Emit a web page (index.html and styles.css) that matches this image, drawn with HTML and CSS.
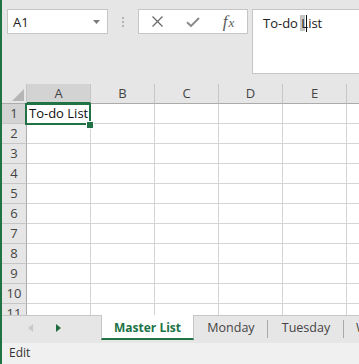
FILE: index.html
```html
<!DOCTYPE html>
<html>
<head>
<meta charset="utf-8">
<link rel="stylesheet" href="styles.css">
</head>
<body>
<div class="app">
  <div class="topbar">
    <div class="namebox">
      <span class="nb-text">A1</span>
      <svg class="nb-drop" width="7" height="4" viewBox="0 0 7 4"><path d="M0 0h7L3.5 4z" fill="#7a7a7a"/></svg>
    </div>
    <div class="grip"><i></i><i></i><i></i></div>
    <div class="fxbtns">
      <div class="slot s1"><svg width="11" height="11" viewBox="0 0 11 11"><path d="M0.5 0.5L10.5 10.5M10.5 0.5L0.5 10.5" stroke="#6a6a6a" stroke-width="1.3" fill="none"/></svg></div>
      <div class="slot s2"><svg width="14" height="10" viewBox="0 0 14 10"><path d="M1 5.2L5 9L13 1" stroke="#8c8c8c" stroke-width="2" fill="none"/></svg></div>
      <div class="slot s3"><span class="fx"><span class="fx-f">f</span><span class="fx-x">x</span></span></div>
    </div>
    <div class="formula">To-do <span class="caret">L</span>ist</div>
  </div>

  <div class="sheet">
    <div class="grid">
      <div class="corner"><svg width="12" height="12" viewBox="0 0 12 12"><path d="M12 0V12H0z" fill="#b5b5b5"/></svg></div>
      <div class="ch sel">A</div>
      <div class="ch">B</div>
      <div class="ch">C</div>
      <div class="ch">D</div>
      <div class="ch">E</div>
      <div class="ch"></div>

      <div class="rh sel">1</div><div class="c text">To-do List</div><div class="c"></div><div class="c"></div><div class="c"></div><div class="c"></div><div class="c"></div>
      <div class="rh">2</div><div class="c"></div><div class="c"></div><div class="c"></div><div class="c"></div><div class="c"></div><div class="c"></div>
      <div class="rh">3</div><div class="c"></div><div class="c"></div><div class="c"></div><div class="c"></div><div class="c"></div><div class="c"></div>
      <div class="rh">4</div><div class="c"></div><div class="c"></div><div class="c"></div><div class="c"></div><div class="c"></div><div class="c"></div>
      <div class="rh">5</div><div class="c"></div><div class="c"></div><div class="c"></div><div class="c"></div><div class="c"></div><div class="c"></div>
      <div class="rh">6</div><div class="c"></div><div class="c"></div><div class="c"></div><div class="c"></div><div class="c"></div><div class="c"></div>
      <div class="rh">7</div><div class="c"></div><div class="c"></div><div class="c"></div><div class="c"></div><div class="c"></div><div class="c"></div>
      <div class="rh">8</div><div class="c"></div><div class="c"></div><div class="c"></div><div class="c"></div><div class="c"></div><div class="c"></div>
      <div class="rh">9</div><div class="c"></div><div class="c"></div><div class="c"></div><div class="c"></div><div class="c"></div><div class="c"></div>
      <div class="rh">10</div><div class="c"></div><div class="c"></div><div class="c"></div><div class="c"></div><div class="c"></div><div class="c"></div>
      <div class="rh">11</div><div class="c"></div><div class="c"></div><div class="c"></div><div class="c"></div><div class="c"></div><div class="c"></div>
    </div>
    <div class="selection"><span class="handle"></span></div>
  </div>

  <div class="tabbar">
    <div class="nav">
      <svg class="arr" width="5" height="8" viewBox="0 0 5 8"><path d="M5 0V8L0 4z" fill="#c9c9c9"/></svg>
      <svg class="arr" width="5" height="8" viewBox="0 0 5 8"><path d="M0 0V8L5 4z" fill="#1f6b40"/></svg>
    </div>
    <div class="tab active">Master List</div>
    <div class="tab">Monday</div>
    <div class="tab">Tuesday</div>
    <div class="tab">Wednesday</div>
  </div>

  <div class="status">Edit</div>
</div>
</body>
</html>
```

FILE: styles.css
```css
html, body {
  margin: 0;
  padding: 0;
}
body {
  background: #e6e6e6;
  font-family: "Open Sans", "Noto Sans", sans-serif;
  overflow: hidden;
}
.app {
  width: 357px;
  height: 364px;
  border-left: 2px solid #217346;
  display: flex;
  flex-direction: column;
  overflow: hidden;
}

/* formula bar area */
.topbar {
  height: 84px;
  flex: none;
  display: flex;
  align-items: flex-start;
  padding: 9px 0 0 5px;
  box-sizing: border-box;
}
.namebox {
  width: 101px;
  height: 25px;
  box-sizing: border-box;
  background: #fff;
  border: 1px solid #c6c6c6;
  display: flex;
  align-items: center;
  justify-content: space-between;
  padding: 0 7px 0 5px;
  font-size: 13px;
  color: #222;
}
.nb-drop { margin-top: 1px; }
.grip {
  width: 30px;
  height: 25px;
  display: flex;
  flex-direction: column;
  align-items: center;
  justify-content: center;
  gap: 2px;
}
.grip i {
  display: block;
  width: 2px;
  height: 2px;
  background: #b4b4b4;
}
.fxbtns {
  width: 110px;
  height: 25px;
  box-sizing: border-box;
  background: #fff;
  border: 1px solid #c6c6c6;
  display: flex;
}
.slot {
  display: flex;
  align-items: center;
  justify-content: center;
  height: 100%;
}
.s1 { width: 36px; }
.s2 { width: 35px; }
.s3 { width: 37px; }
.fx {
  font-family: "Liberation Serif", "DejaVu Serif", serif;
  font-style: italic;
  color: #5a5a5a;
  line-height: 1;
  margin-top: -1px;
}
.fx-f { font-size: 17px; }
.fx-x { font-size: 13px; margin-left: 1px; }
.formula {
  flex: 1;
  height: 65px;
  margin-left: 4px;
  margin-right: -2px;
  box-sizing: border-box;
  background: #fff;
  border: 1px solid #c6c6c6;
  padding: 3px 10px;
  font-size: 13px;
  line-height: 20px;
  color: #222;
  position: relative;
  z-index: 0;
}
.caret {
  position: relative;
}
.caret::before {
  content: "";
  position: absolute;
  left: -1px;
  top: 1px;
  bottom: 1px;
  width: 5px;
  background: #c4c4c4;
  z-index: -1;
}
.caret::after {
  content: "";
  position: absolute;
  left: 5px;
  top: 1px;
  bottom: 0;
  width: 1px;
  background: #111;
}

/* sheet */
.sheet {
  height: 231px;
  flex: none;
  position: relative;
  overflow: hidden;
  background: #fff;
}
.grid {
  display: grid;
  grid-template-columns: 25px repeat(6, 64px);
  grid-auto-rows: 20px;
  font-size: 13px;
  color: #222;
}
.grid > div {
  box-sizing: border-box;
}
.corner {
  background: #e6e6e6;
  border-right: 1px solid #c6c6c6;
  border-bottom: 1px solid #ababab;
  display: flex;
  align-items: flex-end;
  justify-content: flex-end;
  padding: 0 2px 2px 0;
}
.ch {
  background: #e6e6e6;
  border-right: 1px solid #c6c6c6;
  border-bottom: 1px solid #ababab;
  text-align: center;
  line-height: 19px;
  color: #444;
}
.ch.sel {
  background: #d3d3d3;
  border-bottom: 2px solid #217346;
}
.rh {
  background: #e6e6e6;
  border-right: 1px solid #ababab;
  border-bottom: 1px solid #c6c6c6;
  text-align: center;
  line-height: 19px;
  color: #444;
}
.rh.sel {
  background: #d3d3d3;
}
.c {
  border-right: 1px solid #d4d4d4;
  border-bottom: 1px solid #d4d4d4;
  line-height: 19px;
  white-space: nowrap;
}
.c.text {
  padding-left: 2px;
  overflow: visible;
  color: #111;
}
.selection {
  position: absolute;
  left: 23px;
  top: 19px;
  width: 66px;
  height: 22px;
  box-sizing: border-box;
  border: 2px solid #217346;
}
.handle {
  position: absolute;
  right: -4px;
  bottom: -5px;
  width: 6px;
  height: 6px;
  box-sizing: border-box;
  background: #217346;
  outline: 1px solid #fff;
}

/* sheet tabs */
.tabbar {
  height: 28px;
  flex: none;
  box-sizing: border-box;
  border-top: 1px solid #c6c6c6;
  background: #e6e6e6;
  display: flex;
  align-items: flex-start;
  white-space: nowrap;
  font-size: 12.5px;
}
.nav {
  width: 99px;
  height: 24px;
  flex: none;
  display: flex;
  align-items: center;
  padding-left: 26px;
  box-sizing: border-box;
  gap: 23px;
}
.tab {
  flex: none;
  height: 24px;
  line-height: 23px;
  box-sizing: border-box;
  text-align: center;
  color: #444;
  position: relative;
  width: 74px;
}
.tab:not(.active)::after {
  content: "";
  position: absolute;
  right: 0;
  top: 4px;
  bottom: 2px;
  width: 1px;
  background: #a8a8a8;
}
.tab:nth-child(4) { width: 76px; }
.tab:nth-child(5) { width: 90px; padding-left: 12px; text-align: left; }
.tab.active {
  width: 93px;
  height: 25px;
  margin-top: -1px;
  line-height: 25px;
  background: #fff;
  border-left: 1px solid #c6c6c6;
  border-right: 1px solid #c6c6c6;
  border-bottom: 2px solid #217346;
  color: #217346;
  font-weight: 700;
  font-size: 12px;
}

.status {
  flex: 1;
  background: #f0f0f0;
  font-size: 12px;
  color: #333;
  padding-left: 7px;
  line-height: 20px;
}
```
